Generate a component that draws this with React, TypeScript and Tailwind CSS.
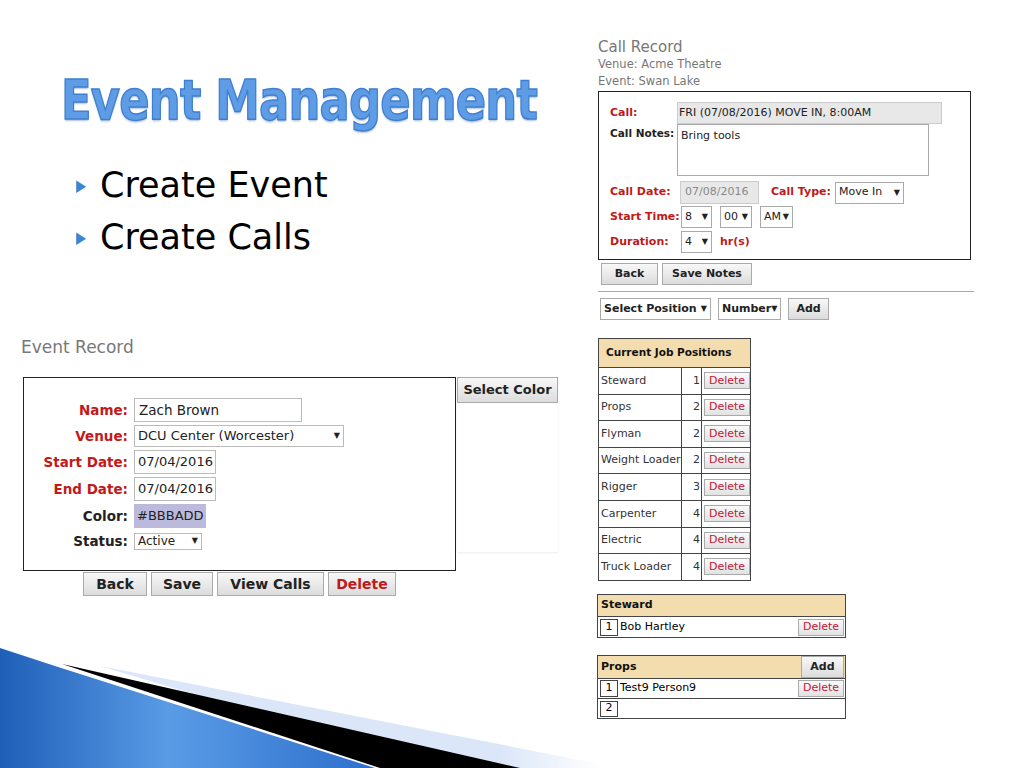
const V = { fontFamily: '"DejaVu Sans", Verdana, sans-serif' };

function Sel({ w, label, className = "" }: { w: string; label: string; className?: string }) {
  return (
    <div className={`${w} ${className} h-[22px] border border-[#aaa] bg-white flex items-center justify-between px-[3px] text-[11px] text-[#222]`}>
      <span>{label}</span>
      <span className="text-[8px]">▼</span>
    </div>
  );
}

function Btn({ children, className = "" }: { children: React.ReactNode; className?: string }) {
  return (
    <div className={`h-[22px] px-2 flex items-center justify-center whitespace-nowrap border border-[#aaa] bg-gradient-to-b from-[#f8f8f8] to-[#dcdcdc] font-bold text-[11px] text-[#222] ${className}`}>
      {children}
    </div>
  );
}

function DelBtn({ className = "" }: { className?: string }) {
  return (
    <div className={`h-[17px] w-[46px] border border-[#aaa] bg-gradient-to-b from-[#fafafa] to-[#e2e2e2] text-[11px] text-[#c0203a] flex items-center justify-center ${className}`}>
      Delete
    </div>
  );
}

const positions: [string, number][] = [
  ["Steward", 1], ["Props", 2], ["Flyman", 2], ["Weight Loader", 2],
  ["Rigger", 3], ["Carpenter", 4], ["Electric", 4], ["Truck Loader", 4],
];

export default function App() {
  return (
    <div className="relative w-[1024px] h-[768px] bg-white overflow-hidden" style={V}>
      {/* title */}
      <div
        className="absolute left-[61px] top-[58px] text-[56px] font-bold tracking-[-1px] text-[#5e9ce6] whitespace-nowrap origin-left scale-x-[0.8]"
        style={{
          WebkitTextStroke: "1.5px #3f7fcf",
          textShadow: "0 2px 2px rgba(40,80,140,0.35)",
        }}
      >
        Event Management
      </div>

      {/* bullets */}
      <div className="absolute left-[76px] top-[163px] flex flex-col gap-[7px] text-[35px] text-black leading-[45px]">
        {["Create Event", "Create Calls"].map((t) => (
          <div key={t} className="flex items-center gap-[14px]">
            <span className="text-[#3a87d0] text-[13px] scale-y-125">▶</span>
            <span>{t}</span>
          </div>
        ))}
      </div>

      {/* Event record */}
      <div className="absolute left-[21px] top-[335px] text-[17px] text-[#777]">Event Record</div>
      <div className="absolute left-[23px] top-[377px] w-[433px] h-[194px] border border-[#222] bg-white">
        <div className="grid grid-cols-[104px_auto] gap-x-[6px] gap-y-[3px] pt-[20px] text-[13.5px] items-center">
          <div className="text-right font-bold text-[#c01a1a]">Name:</div>
          <div className="w-[168px] h-[24px] border border-[#bbb] px-[4px] flex items-center text-[#222]">Zach Brown</div>
          <div className="text-right font-bold text-[#c01a1a]">Venue:</div>
          <div className="w-[210px] h-[22px] border border-[#bbb] px-[3px] flex items-center justify-between text-[13px] text-[#222]">
            <span>DCU Center (Worcester)</span><span className="text-[8px]">▼</span>
          </div>
          <div className="text-right font-bold text-[#c01a1a]">Start Date:</div>
          <div className="w-[82px] h-[24px] border border-[#bbb] px-[3px] flex items-center text-[13px] text-[#222]">07/04/2016</div>
          <div className="text-right font-bold text-[#c01a1a]">End Date:</div>
          <div className="w-[82px] h-[24px] border border-[#bbb] px-[3px] flex items-center text-[13px] text-[#222]">07/04/2016</div>
          <div className="text-right font-bold text-[#222]">Color:</div>
          <div className="w-[72px] h-[24px] bg-[#bbbadd] px-[3px] flex items-center text-[13px] text-[#222] overflow-hidden whitespace-nowrap">#BBBADD</div>
          <div className="text-right font-bold text-[#222]">Status:</div>
          <div className="w-[68px] h-[17px] border border-[#bbb] px-[3px] flex items-center justify-between text-[12px] text-[#222]">
            <span>Active</span><span className="text-[8px]">▼</span>
          </div>
        </div>
      </div>
      <div className="absolute left-[457px] top-[377px] w-[101px] h-[175px] bg-white shadow-[0_1px_2px_rgba(0,0,0,0.08)]">
        <Btn className="h-[26px] text-[13px] w-[101px] px-0">Select Color</Btn>
      </div>
      <div className="absolute left-[83px] top-[572px] flex gap-[4px]">
        <Btn className="h-[24px] w-[64px] text-[14px]">Back</Btn>
        <Btn className="h-[24px] w-[62px] text-[14px]">Save</Btn>
        <Btn className="h-[24px] w-[107px] text-[14px]">View Calls</Btn>
        <Btn className="h-[24px] w-[68px] text-[14px] text-[#c01a1a]">Delete</Btn>
      </div>

      {/* Call record */}
      <div className="absolute left-[598px] top-[38px] text-[#777]">
        <div className="text-[15px] leading-[18px]">Call Record</div>
        <div className="text-[11.5px] leading-[17px]">Venue: Acme Theatre</div>
        <div className="text-[11.5px] leading-[17px]">Event: Swan Lake</div>
      </div>
      <div className="absolute left-[598px] top-[91px] w-[373px] h-[169px] border border-[#222] bg-white text-[11px] font-bold">
        <div className="flex mt-[10px] items-center">
          <div className="w-[78px] pl-[11px] text-[#c01a1a]">Call:</div>
          <div className="w-[265px] h-[22px] bg-[#e8e8e8] border border-[#ccc] px-[1px] flex items-center font-normal text-[#222]">FRI (07/08/2016) MOVE IN, 8:00AM</div>
        </div>
        <div className="flex">
          <div className="w-[78px] pl-[11px] text-[#222] pt-[2px] whitespace-nowrap text-[10.5px]">Call Notes:</div>
          <div className="w-[252px] h-[52px] border border-[#aaa] px-[3px] pt-[3px] font-normal text-[#222]">Bring tools</div>
        </div>
        <div className="flex items-center mt-[5px]">
          <div className="w-[81px] pl-[11px] text-[#c01a1a]">Call Date:</div>
          <div className="w-[79px] h-[23px] bg-[#e8e8e8] border border-[#ccc] px-[4px] flex items-center font-normal text-[#888]">07/08/2016</div>
          <div className="ml-[12px] text-[#c01a1a]">Call Type:</div>
          <Sel w="w-[69px]" label="Move In" className="ml-[4px] h-[20px] font-normal" />
        </div>
        <div className="flex items-center mt-[2px]">
          <div className="w-[82px] pl-[11px] text-[#c01a1a]">Start Time:</div>
          <Sel w="w-[31px]" label="8" className="h-[20px] font-normal" />
          <Sel w="w-[32px]" label="00" className="ml-[8px] h-[20px] font-normal" />
          <Sel w="w-[33px]" label="AM" className="ml-[8px] h-[20px] font-normal" />
        </div>
        <div className="flex items-center mt-[3px]">
          <div className="w-[82px] pl-[11px] text-[#c01a1a]">Duration:</div>
          <Sel w="w-[31px]" label="4" className="h-[20px] font-normal" />
          <div className="ml-[8px] text-[#c01a1a]">hr(s)</div>
        </div>
      </div>
      <div className="absolute left-[601px] top-[263px] flex gap-[4px]">
        <Btn className="w-[57px]">Back</Btn>
        <Btn className="w-[90px]">Save Notes</Btn>
      </div>
      <div className="absolute left-[598px] top-[291px] w-[376px] border-t border-[#aaa]" />
      <div className="absolute left-[600px] top-[298px] flex gap-[7px]">
        <Sel w="w-[111px]" label="Select Position" className="font-bold text-[10.5px]" />
        <Sel w="w-[63px]" label="Number" className="font-bold text-[10.5px]" />
        <Btn className="w-[41px]">Add</Btn>
      </div>

      {/* job positions */}
      <table className="absolute left-[598px] top-[338px] w-[153px] border-collapse text-[11px] text-[#333]">
        <thead>
          <tr className="h-[29px] bg-[#f3dcae]">
            <th colSpan={3} className="border border-[#444] text-left pl-[7px] font-bold text-[10.5px] text-[#111]">Current Job Positions</th>
          </tr>
        </thead>
        <tbody>
          {positions.map(([n, c]) => (
            <tr key={n} className="h-[26.6px]">
              <td className="border border-[#444] pl-[2px] w-[78px] whitespace-nowrap">{n}</td>
              <td className="border border-[#444] text-right pr-[1px] w-[22px]">{c}</td>
              <td className="border border-[#444] pl-[2px]"><DelBtn /></td>
            </tr>
          ))}
        </tbody>
      </table>

      {/* Steward */}
      <div className="absolute left-[597px] top-[594px] w-[249px] border border-[#444] text-[11px]">
        <div className="h-[22px] bg-[#f3dcae] border-b border-[#444] flex items-center pl-[3px] font-bold text-[#111]">Steward</div>
        <div className="h-[20px] flex items-center pl-[2px] pr-[1px]">
          <div className="w-[18px] h-[17px] border border-[#444] flex items-center justify-center">1</div>
          <div className="ml-[2px] flex-1">Bob Hartley</div>
          <DelBtn />
        </div>
      </div>

      {/* Props */}
      <div className="absolute left-[597px] top-[655px] w-[249px] border border-[#444] text-[11px]">
        <div className="h-[23px] bg-[#f3dcae] border-b border-[#444] flex items-center justify-between pl-[3px] pr-[1px] font-bold text-[#111]">
          <span>Props</span>
          <Btn className="h-[19px] w-[43px]">Add</Btn>
        </div>
        <div className="h-[20px] flex items-center pl-[2px] pr-[1px] border-b border-[#444]">
          <div className="w-[18px] h-[17px] border border-[#444] flex items-center justify-center">1</div>
          <div className="ml-[2px] flex-1">Test9 Person9</div>
          <DelBtn />
        </div>
        <div className="h-[19px] flex items-center pl-[2px]">
          <div className="w-[18px] h-[16px] border border-[#444] flex items-center justify-center">2</div>
        </div>
      </div>

      {/* slide corner decoration */}
      <svg className="absolute left-0 top-[640px]" width="600" height="128" viewBox="0 0 600 128">
        <defs>
          <linearGradient id="bl" x1="0" y1="0" x2="1" y2="0">
            <stop offset="0" stopColor="#1f5fb8" />
            <stop offset="0.45" stopColor="#5a9be6" />
            <stop offset="1" stopColor="#2d6fcc" />
          </linearGradient>
          <linearGradient id="lb" x1="0" y1="0" x2="1" y2="0">
            <stop offset="0" stopColor="#dbe6f8" />
            <stop offset="0.8" stopColor="#dbe6f8" />
            <stop offset="1" stopColor="#ffffff" />
          </linearGradient>
        </defs>
        <polygon points="100,26 600,124 600,128 440,128" fill="url(#lb)" />
        <polygon points="62,24 520,128 380,128" fill="#000" />
        <polygon points="0,8 55,26 375,128 0,128" fill="url(#bl)" />
      </svg>
    </div>
  );
}
